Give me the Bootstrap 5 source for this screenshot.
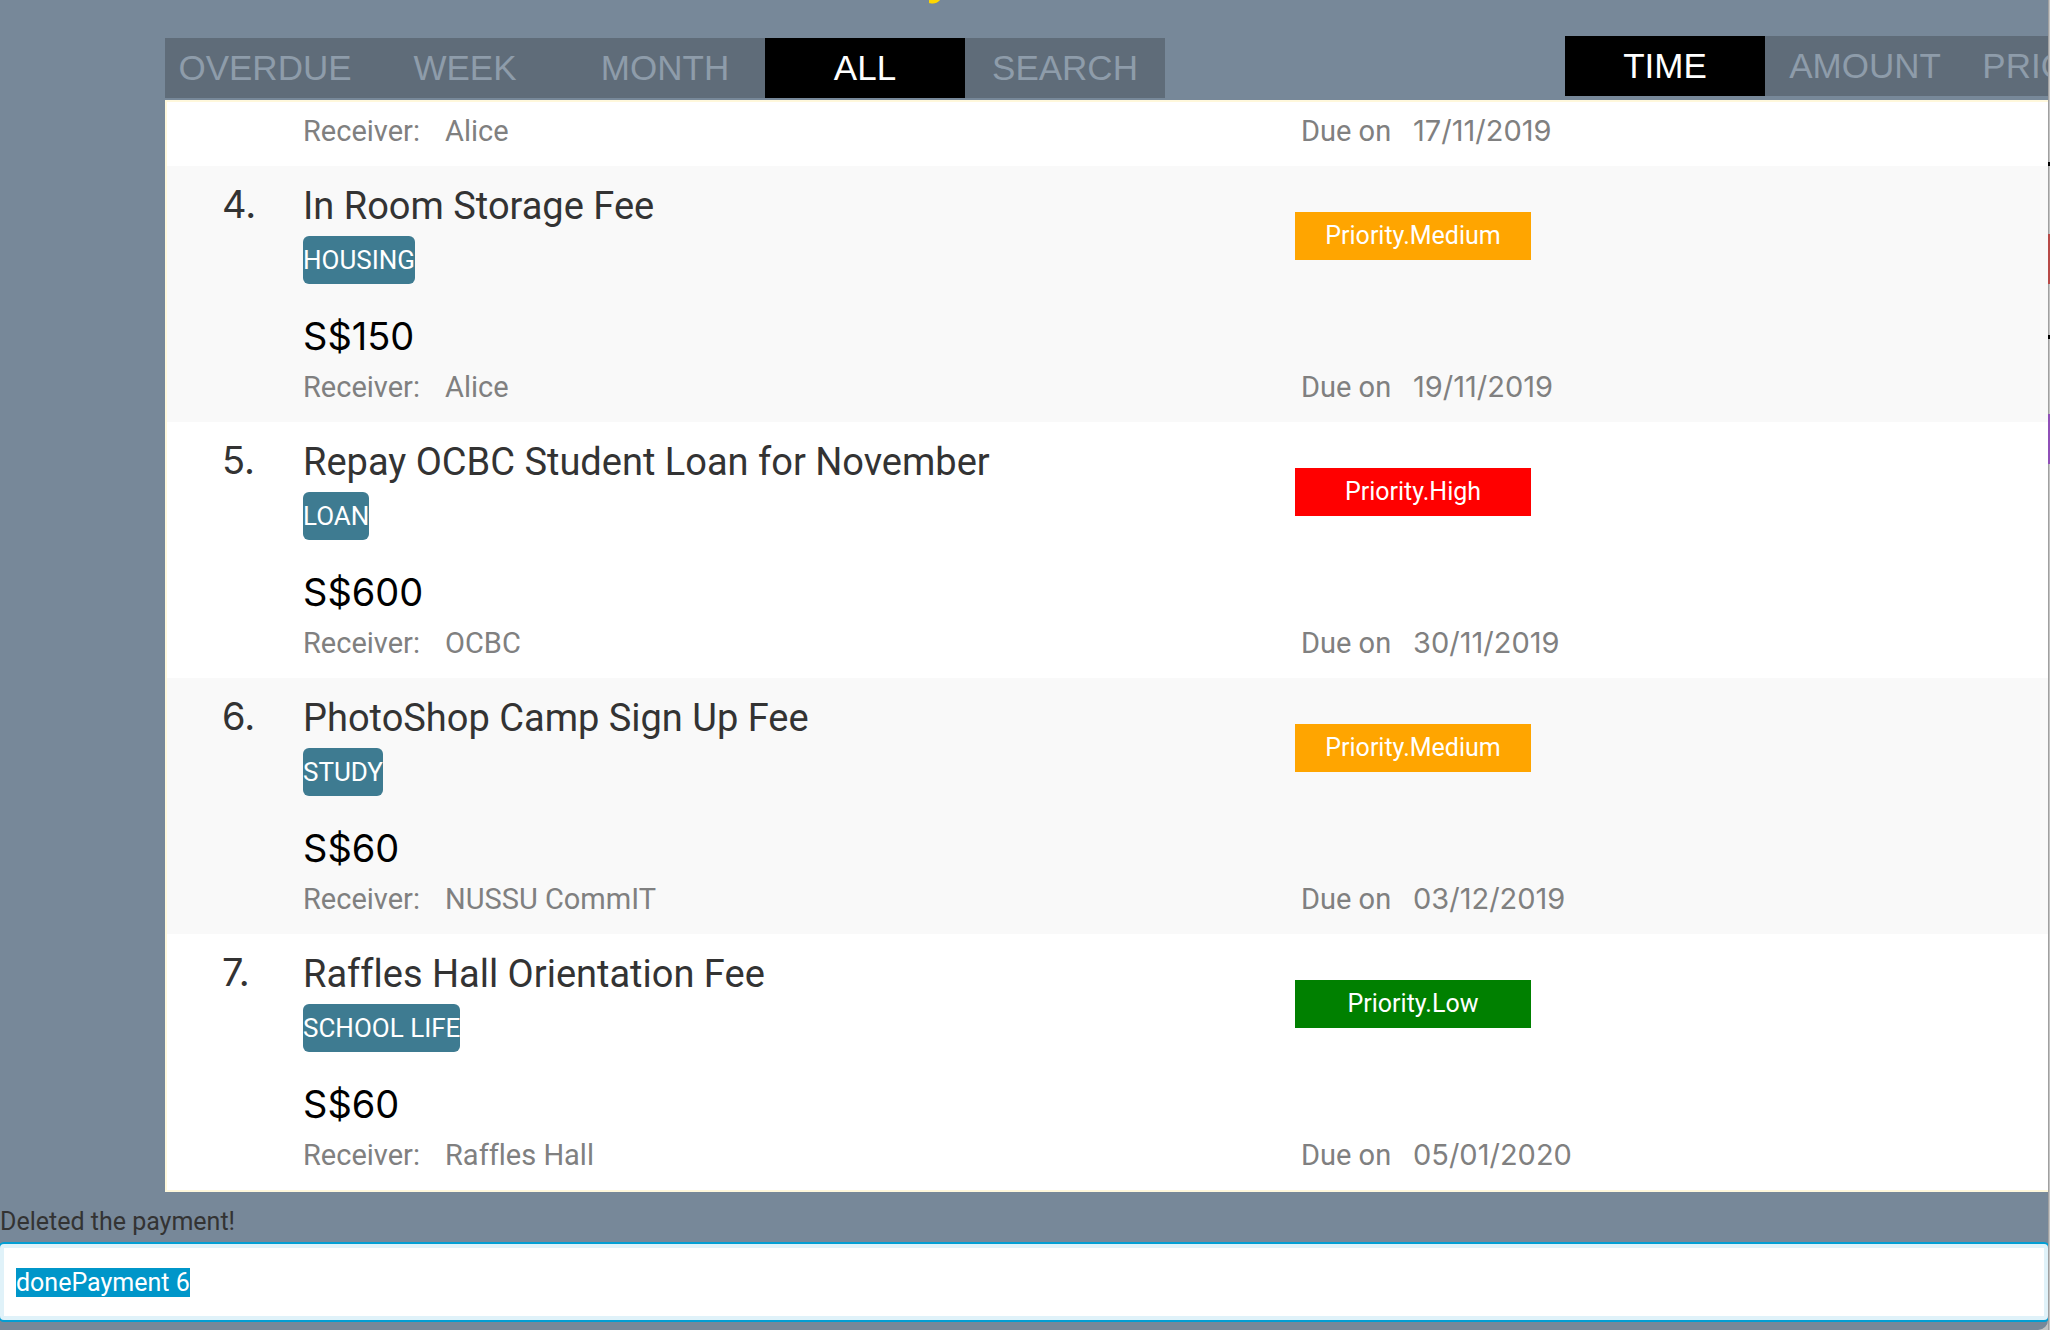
<!DOCTYPE html>
<html lang="en">
<head>
<meta charset="utf-8">
<meta name="viewport" content="width=device-width, initial-scale=1">
<title>Payments</title>
<link rel="stylesheet" href="https://cdn.jsdelivr.net/npm/bootstrap@5.3.0/dist/css/bootstrap.min.css">
<style>
html, body { height: 100%; }
body { background: #c4c4c4; font-family: Roboto, "Liberation Sans", sans-serif; font-variant-ligatures: none; color: #333; line-height: 1; overflow: hidden; }
.app-window { background: #778899; border-bottom-right-radius: 10px; overflow: hidden; min-width: 0; }
.desk-edge { width: 2px; background:
  linear-gradient(#000, #000) 0 162px / 100% 4px no-repeat,
  linear-gradient(#000, #000) 0 335px / 100% 4px no-repeat,
  linear-gradient(#b84a48, #b84a48) 0 234px / 100% 50px no-repeat,
  linear-gradient(#9050b8, #9050b8) 0 414px / 100% 50px no-repeat,
  linear-gradient(90deg, #a0a0a0 50%, #c4c4c4 50%); }
.app-title { height: 36px; margin: 0; padding-left: 926px; overflow: hidden; color: gold; font-size: 60px; line-height: 36px; }
.title-text { display: block; margin-top: -47px; }
.pane { margin-left: 165px; }
.filters { height: 64px; }
.tab-btn { width: 200px; height: 60px; flex: none; border: 0; border-radius: 0; padding: 0; background: #5f6c79; color: #8e9caa; font: 35px/60px "Liberation Sans", Arial, sans-serif; text-align: center; }
.tab-btn.active { background: #000; color: #fff; }
.left-tabs { padding-top: 2px; }
.right-tabs { width: 483px; overflow: hidden; }
.pay-list { border: 2px solid cornsilk; border-right: 0; background: #fff; margin: 0; padding: 0; list-style: none; }
.pay-item { display: grid; grid-template-columns: 136px 992fr 753fr; height: 256px; background: #fff; padding-top: 16px; }
.pay-item.alt { background: #f9f9f9; }
.pay-item.tail { height: 64px; padding-top: 0; }
.pay-no { padding-left: 55px; }
.big-text { font-size: 38px; line-height: 48px; }
.big-num { font-family: Inter, "Liberation Sans", sans-serif; font-size: 38px; line-height: 44px; }
.tag-chip { background: #3e7b91; color: #fff; font-size: 26px; line-height: 48px; height: 48px; border-radius: 6px; margin: 6px 0 30px; }
.sum { color: #000; }
.meta { color: #808080; font-size: 29px; line-height: 40px; margin-top: 9px; display: flex; }
.meta-key { width: 142px; }
.due { padding-left: 6px; }
.prio + .due { margin-top: 107px; }
.due .meta-key { width: 112px; }
.due-date { font-family: Inter, "Liberation Sans", sans-serif; }
.prio { width: 236px; height: 48px; margin-top: 30px; color: #fff; font-size: 25px; line-height: 48px; text-align: center; }
.prio-high { background: red; } .prio-medium { background: orange; } .prio-low { background: green; }
.status-line { height: 50px; padding-top: 13px; font-size: 25px; line-height: 34px; color: #333; display: block; }
.cmd, .cmd:focus { height: 80px; width: calc(100% + 4px); margin-left: -2px; border: 2px solid #039ed3; border-radius: 6px; box-shadow: inset 0 0 0 4px #e0f2f9; background: #fff; padding: 0 16px; font-size: 25px; line-height: 34px; color: #333; outline: 0; flex: none; max-width: none; }
.cmd::selection { background: #0096c9; color: #fff; }
</style>
</head>
<body class="d-flex">
<main class="app-window d-flex flex-column flex-grow-1">
  <h1 class="app-title"><span class="title-text">y</span></h1>
  <div class="pane">
    <nav class="filters d-flex justify-content-between">
      <div class="left-tabs d-flex">
        <button type="button" class="tab-btn">OVERDUE</button>
        <button type="button" class="tab-btn">WEEK</button>
        <button type="button" class="tab-btn">MONTH</button>
        <button type="button" class="tab-btn active">ALL</button>
        <button type="button" class="tab-btn">SEARCH</button>
      </div>
      <div class="right-tabs d-flex">
        <button type="button" class="tab-btn active">TIME</button>
        <button type="button" class="tab-btn">AMOUNT</button>
        <button type="button" class="tab-btn">PRIORITY</button>
      </div>
    </nav>
    <ol class="pay-list" id="payList"></ol>
  </div>
  <label class="status-line" for="cmd">Deleted the payment!</label>
  <input class="cmd form-control" id="cmd" type="text" value="donePayment 6" autocomplete="off" spellcheck="false">
</main>
<aside class="desk-edge flex-shrink-0"></aside>
<script src="https://cdn.jsdelivr.net/npm/bootstrap@5.3.0/dist/js/bootstrap.bundle.min.js"></script>
<script>
const payments = [
  { tail: true, to: 'Alice', due: '17/11/2019' },
  { no: 4, name: 'In Room Storage Fee', tag: 'HOUSING', sum: 150, to: 'Alice', due: '19/11/2019', prio: 'Medium' },
  { no: 5, name: 'Repay OCBC Student Loan for November', tag: 'LOAN', sum: 600, to: 'OCBC', due: '30/11/2019', prio: 'High' },
  { no: 6, name: 'PhotoShop Camp Sign Up Fee', tag: 'STUDY', sum: 60, to: 'NUSSU CommIT', due: '03/12/2019', prio: 'Medium' },
  { no: 7, name: 'Raffles Hall Orientation Fee', tag: 'SCHOOL LIFE', sum: 60, to: 'Raffles Hall', due: '05/01/2020', prio: 'Low' }
];
const receiver = p => `<div class="meta"><span class="meta-key">Receiver:</span><span>${p.to}</span></div>`;
const due = p => `<div class="meta due"><span class="meta-key">Due on</span><span class="due-date">${p.due}</span></div>`;
document.getElementById('payList').innerHTML = payments.map((p, i) => p.tail
  ? `<li class="pay-item tail"><div></div>${receiver(p)}${due(p)}</li>`
  : `<li class="pay-item ${i % 2 ? 'alt' : ''}">
      <div class="pay-no big-num">${p.no}.</div>
      <div class="d-flex flex-column align-items-start">
        <div class="big-text">${p.name}</div>
        <span class="tag-chip">${p.tag}</span>
        <div class="big-num sum">S$${p.sum}</div>
        ${receiver(p)}
      </div>
      <div>
        <div class="prio prio-${p.prio.toLowerCase()}">Priority.${p.prio}</div>
        ${due(p)}
      </div>
    </li>`).join('');
const cmd = document.getElementById('cmd');
cmd.focus();
cmd.select();
</script>
</body>
</html>
